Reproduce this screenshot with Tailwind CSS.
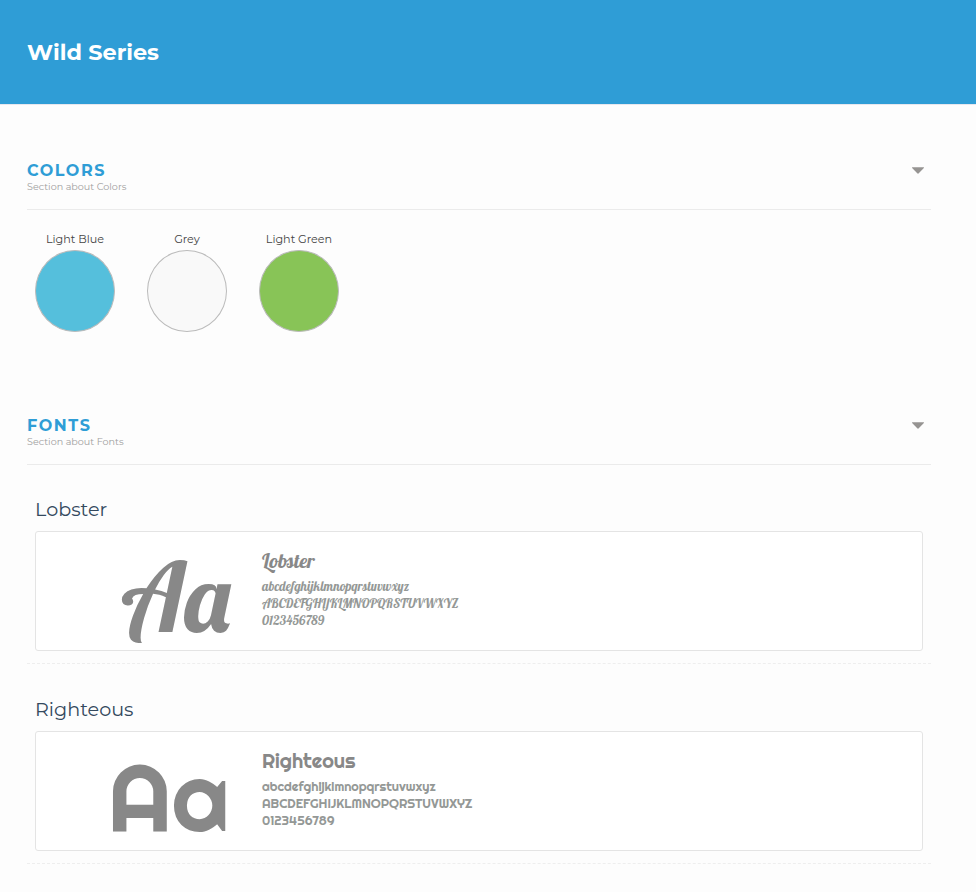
<!DOCTYPE html>
<html lang="en">
<head>
<meta charset="utf-8">
<title>Wild Series</title>
<script src="https://cdn.jsdelivr.net/npm/@tailwindcss/browser@4"></script>
</head>
<body class="bg-[#fdfdfd] font-['Montserrat','Inter',sans-serif] h-[892px] overflow-hidden">
<header class="h-[105px] bg-[#2f9dd6] border-b border-[#e7e7ee] pl-[27px] flex items-center">
  <h1 class="text-white text-[22.4px] leading-8 font-bold">Wild Series</h1>
</header>
<main class="pl-[27px] pr-[45px] pt-14">
  <section class="h-[255px]">
    <div class="h-[49px] border-b border-[#ebebeb] flex justify-between">
      <div class="pt-px">
        <h2 class="text-[16px] leading-[18px] font-bold tracking-[1.6px] text-[#2f9dd6]">COLORS</h2>
        <p class="text-[9.6px] leading-[14px] text-[#a0a0a0]">Section about Colors</p>
      </div>
      <svg class="w-3 h-[7px] mt-[6px] mr-[7px]" viewBox="0 0 12 7"><path d="M0 .3H12Q12 1 11.4 1.6L7 6Q6 7.3 5 6L.6 1.6Q0 1 0 .3Z" fill="#969492"/></svg>
    </div>
    <div class="flex gap-8 pl-2 pt-[21px]">
      <div class="w-20 flex flex-col items-center"><span class="h-[19px] text-[11.2px] leading-[17px] text-[#444] whitespace-nowrap">Light Blue</span><i class="w-20 h-[82px] rounded-[50%] border border-[#bbb] bg-[#55bfdc]"></i></div>
      <div class="w-20 flex flex-col items-center"><span class="h-[19px] text-[11.2px] leading-[17px] text-[#444] whitespace-nowrap">Grey</span><i class="w-20 h-[82px] rounded-[50%] border border-[#bbb] bg-[#f9f9f9]"></i></div>
      <div class="w-20 flex flex-col items-center"><span class="h-[19px] text-[11.2px] leading-[17px] text-[#444] whitespace-nowrap">Light Green</span><i class="w-20 h-[82px] rounded-[50%] border border-[#bbb] bg-[#88c457]"></i></div>
    </div>
  </section>
  <section>
    <div class="h-[49px] border-b border-[#ebebeb] flex justify-between">
      <div class="pt-px">
        <h2 class="text-[16px] leading-[18px] font-bold tracking-[1.6px] text-[#2f9dd6]">FONTS</h2>
        <p class="text-[9.6px] leading-[14px] text-[#a0a0a0]">Section about Fonts</p>
      </div>
      <svg class="w-3 h-[7px] mt-[6px] mr-[7px]" viewBox="0 0 12 7"><path d="M0 .3H12Q12 1 11.4 1.6L7 6Q6 7.3 5 6L.6 1.6Q0 1 0 .3Z" fill="#969492"/></svg>
    </div>
    <article class="h-[199px] pt-[30px] px-2 border-b border-dashed border-[#eee]">
      <h3 class="h-9 text-[19.2px] leading-7 text-[#34495e]">Lobster</h3>
      <div class="h-[120px] bg-white border border-[#e4e4e4] rounded-[3px] flex font-['Lobster','Liberation_Serif',serif]">
        <div class="w-[226px] pr-8 pt-1 text-right text-[96px] leading-[120px] text-[#888]">Aa</div>
        <div class="pt-4">
          <div class="text-[20px] leading-[25px] mb-[5px] text-[#888]">Lobster</div>
          <div class="text-[12.8px] leading-[17px] text-[#949896]">abcdefghijklmnopqrstuvwxyz<br>ABCDEFGHIJKLMNOPQRSTUVWXYZ<br>0123456789</div>
        </div>
      </div>
    </article>
    <article class="h-[200px] pt-[31px] px-2 border-b border-dashed border-[#eee]">
      <h3 class="h-9 text-[19.2px] leading-7 text-[#34495e]">Righteous</h3>
      <div class="h-[120px] bg-white border border-[#e4e4e4] rounded-[3px] flex font-['Righteous','Lato',sans-serif]">
        <div class="w-[226px] pr-8 pt-1 text-right text-[96px] leading-[120px] text-[#888]">Aa</div>
        <div class="pt-4">
          <div class="text-[20px] leading-[25px] mb-[5px] text-[#888]">Righteous</div>
          <div class="text-[12.8px] leading-[17px] text-[#949896]">abcdefghijklmnopqrstuvwxyz<br>ABCDEFGHIJKLMNOPQRSTUVWXYZ<br>0123456789</div>
        </div>
      </div>
    </article>
  </section>
</main>
</body>
</html>
